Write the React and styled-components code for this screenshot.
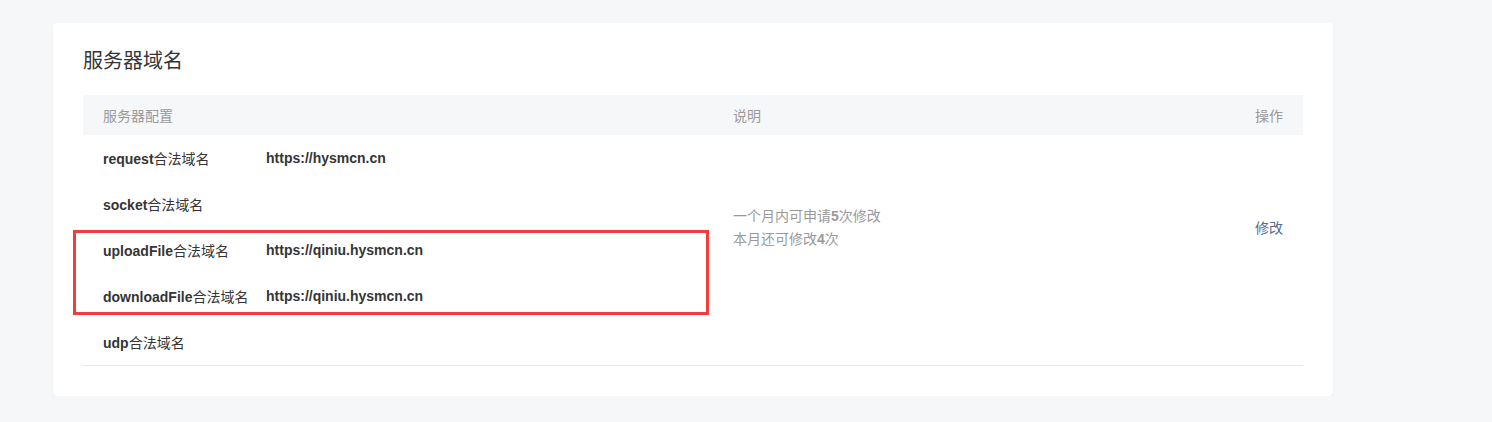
import React from "react";
import styled, { createGlobalStyle } from "styled-components";

const Global = createGlobalStyle`
  html, body { margin: 0; padding: 0; background: #f6f7f9; }
  body {
    font-family: "Liberation Sans", Arial, "Noto Sans CJK SC", sans-serif;
    font-size: 14px;
    color: #353535;
  }
`;

const Page = styled.div`
  padding: 23px 0 0 53px;
  width: 1280px;
`;

const Card = styled.section`
  position: relative;
  background: #fff;
  border-radius: 4px;
  box-shadow: 0 1px 2px rgba(0, 0, 0, 0.08);
  padding: 23px 30px 30px;
`;

const Title = styled.h2`
  margin: 0 0 21px;
  font-size: 20px;
  line-height: 28px;
  font-weight: 400;
  color: #353535;
  font-family: "Noto Sans CJK SC", sans-serif;
`;

const Table = styled.div`
  display: grid;
  grid-template-columns: 630px 1fr 120px;
  grid-template-rows: 40px repeat(5, 46px);
  border-bottom: 1px solid #e7e7eb;
`;

const Head = styled.div`
  background: #f6f7f9;
  color: #9a9a9a;
  display: flex;
  align-items: center;
  justify-content: ${(p) => (p.$right ? "flex-end" : "flex-start")};
  padding: 0 20px;
  font-family: "Noto Sans CJK SC", sans-serif;
`;

const ConfigCell = styled.div`
  grid-column: 1;
  display: grid;
  grid-template-columns: 163px 1fr;
  align-items: center;
  padding-left: 20px;
`;

const Label = styled.span`
  color: #353535;
  b {
    font-weight: 700;
  }
  span {
    font-family: "Noto Sans CJK SC", sans-serif;
  }
`;

const Value = styled.span`
  font-weight: 700;
  color: #353535;
`;

const Desc = styled.div`
  grid-column: 2;
  grid-row: 2 / span 4;
  display: flex;
  flex-direction: column;
  justify-content: center;
  padding-left: 20px;
  color: #9a9a9a;
  line-height: 22px;
  font-family: "Noto Sans CJK SC", sans-serif;
  b {
    font-family: "Liberation Sans", Arial, sans-serif;
    font-weight: 700;
  }
`;

const Action = styled.div`
  grid-column: 3;
  grid-row: 2 / span 4;
  display: flex;
  align-items: center;
  justify-content: flex-end;
  padding-right: 20px;
`;

const Link = styled.a`
  color: #576b95;
  text-decoration: none;
  font-family: "Noto Sans CJK SC", sans-serif;
  cursor: pointer;
`;

const Highlight = styled.div`
  position: absolute;
  left: 20px;
  top: 207px;
  width: 636px;
  height: 85px;
  box-sizing: border-box;
  border: 3px solid #f53c3c;
  pointer-events: none;
`;

const rows = [
  { name: "request", value: "https://hysmcn.cn" },
  { name: "socket", value: "" },
  { name: "uploadFile", value: "https://qiniu.hysmcn.cn" },
  { name: "downloadFile", value: "https://qiniu.hysmcn.cn" },
  { name: "udp", value: "" },
];

export default function App() {
  return (
    <>
      <Global />
      <Page>
        <Card>
          <Title>服务器域名</Title>
          <Table>
            <Head>服务器配置</Head>
            <Head>说明</Head>
            <Head $right>操作</Head>
            {rows.map((r) => (
              <ConfigCell key={r.name}>
                <Label>
                  <b>{r.name}</b>
                  <span>合法域名</span>
                </Label>
                <Value>{r.value}</Value>
              </ConfigCell>
            ))}
            <Desc>
              <div>
                一个月内可申请<b>5</b>次修改
              </div>
              <div>
                本月还可修改<b>4</b>次
              </div>
            </Desc>
            <Action>
              <Link>修改</Link>
            </Action>
          </Table>
          <Highlight />
        </Card>
      </Page>
    </>
  );
}
